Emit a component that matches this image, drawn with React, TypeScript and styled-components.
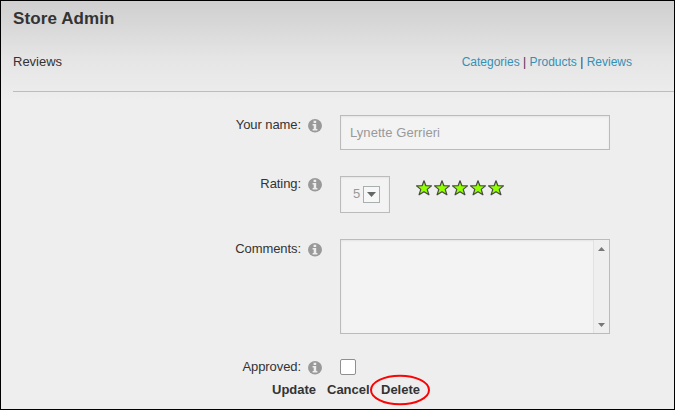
import React from "react";
import styled, { createGlobalStyle } from "styled-components";

const GlobalStyle = createGlobalStyle`
  * { box-sizing: border-box; }
  html, body { margin: 0; padding: 0; }
  body { font: 13px/16px "Liberation Sans", Arial, sans-serif; color: #333; }
`;

const Page = styled.main`
  width: 675px;
  height: 410px;
  border: 1px solid #000;
  overflow: hidden;
  background: linear-gradient(#d0d0d0 0, #d7d7d7 22px, #e5e5e5 57px, #eee 100px, #eee 100%);
`;

const Header = styled.header`
  height: 91px;
  margin-left: 12px;
  padding-top: 8px;
  border-bottom: 1px solid #bdbdbd;
`;

const Title = styled.h1`
  margin: 0;
  font-size: 17px;
  line-height: 20px;
  font-weight: bold;
  letter-spacing: 0.1px;
`;

const SubHeader = styled.div`
  display: flex;
  justify-content: space-between;
  margin-top: 25px;
  padding-right: 42px;
`;

const Nav = styled.nav`
  white-space: pre;
  font-size: 12px;
  line-height: 17px;
  color: #4b2d55;
`;

const NavLink = styled.a`
  color: #3590b5;
`;

const Form = styled.form`
  padding-top: 23px;
`;

const Row = styled.div<{ $height: number }>`
  display: grid;
  grid-template-columns: 300px 14px 1fr;
  column-gap: 7px;
  align-items: start;
  height: ${(p) => p.$height}px;
`;

const Label = styled.label<{ $top?: number }>`
  padding-top: ${(p) => p.$top ?? 2}px;
  text-align: right;
  letter-spacing: -0.08px;
`;

const InfoSvg = styled.svg<{ $top: number }>`
  display: block;
  width: 14px;
  height: 14px;
  margin-top: ${(p) => p.$top}px;
`;

const Field = styled.div`
  display: flex;
  align-items: flex-start;
  padding-left: 11px;
`;

const Box = styled.div<{ $width: number; $height: number }>`
  display: flex;
  width: ${(p) => p.$width}px;
  height: ${(p) => p.$height}px;
  border: 1px solid #bbb;
  background: #f3f3f3;
  box-shadow: inset 0 1px 2px #e4e4e4;
  color: #999;
`;

const NameBox = styled(Box)`
  padding: 9px;
  letter-spacing: 0.06px;
`;

const SelectBox = styled(Box)`
  padding: 9px 0 0 12px;
  gap: 3px;
`;

const SelectArrow = styled.span`
  display: flex;
  align-items: center;
  justify-content: center;
  width: 17px;
  height: 17px;
  border: 1px solid #a9afb1;
  background: #f7f7f7;
`;

const Stars = styled.div`
  display: flex;
  gap: 2px;
  padding: 4px 0 0 26px;
`;

const CommentBox = styled(Box)`
  justify-content: flex-end;
`;

const ScrollBar = styled.div`
  display: flex;
  flex-direction: column;
  justify-content: space-between;
  align-items: center;
  width: 16px;
  padding: 7px 0 6px;
  border-left: 1px solid #e2e2e2;
  background: #efefef;
`;

const Checkbox = styled.span`
  width: 16px;
  height: 16px;
  margin-top: 1px;
  border: 1px solid #8f8f8f;
  border-radius: 2px;
  background: #fff;
`;

const Actions = styled.div`
  display: flex;
  align-items: flex-start;
  padding-left: 271px;
  font-weight: bold;
`;

const Action = styled.a<{ $width: number }>`
  position: relative;
  width: ${(p) => p.$width}px;
`;

const Ring = styled.svg`
  position: absolute;
  left: -12px;
  top: -8px;
`;

const Info = ({ top }: { top: number }) => (
  <InfoSvg $top={top} viewBox="0 0 14 14">
    <ellipse cx="7" cy="6.7" rx="7" ry="6.7" fill="#999" />
    <path d="M5.6 1.8h2.6v2.1H5.6zM4.6 5h3.6v5h1.2v1.6H4.6V10h1.1V6.5H4.6z" fill="#eee" />
  </InfoSvg>
);

const Star = () => (
  <svg width="16" height="16" viewBox="0 0 16 16">
    <path
      d="M8 .8 9.9 5.7 15.5 5.9 11.2 9.4 12.9 14.8 8 11.7 3.1 14.8 4.8 9.4.5 5.9l5.6-.2z"
      fill="#91ff00"
      stroke="#484848"
      strokeWidth="1.2"
      strokeLinejoin="round"
    />
  </svg>
);

export default function App() {
  return (
    <>
      <GlobalStyle />
      <Page>
        <Header>
          <Title>Store Admin</Title>
          <SubHeader>
            <span>Reviews</span>
            <Nav>
              <NavLink>Categories</NavLink> | <NavLink>Products</NavLink> | <NavLink>Reviews</NavLink>
            </Nav>
          </SubHeader>
        </Header>
        <Form>
          <Row $height={61}>
            <Label>Your name:</Label>
            <Info top={4} />
            <Field>
              <NameBox $width={270} $height={35}>Lynette Gerrieri</NameBox>
            </Field>
          </Row>
          <Row $height={63}>
            <Label $top={0}>Rating:</Label>
            <Info top={2} />
            <Field>
              <SelectBox $width={50} $height={37}>
                5
                <SelectArrow>
                  <svg width="9" height="5" viewBox="0 0 9 5">
                    <path d="M0 0h9L4.5 5z" fill="#666" />
                  </svg>
                </SelectArrow>
              </SelectBox>
              <Stars>
                {[1, 2, 3, 4, 5].map((n) => (
                  <Star key={n} />
                ))}
              </Stars>
            </Field>
          </Row>
          <Row $height={119}>
            <Label>Comments:</Label>
            <Info top={4} />
            <Field>
              <CommentBox $width={270} $height={95}>
                <ScrollBar>
                  <svg width="7" height="4" viewBox="0 0 7 4">
                    <path d="M0 4h7L3.5 0z" fill="#777" />
                  </svg>
                  <svg width="7" height="4" viewBox="0 0 7 4">
                    <path d="M0 0h7L3.5 4z" fill="#777" />
                  </svg>
                </ScrollBar>
              </CommentBox>
            </Field>
          </Row>
          <Row $height={24}>
            <Label $top={1}>Approved:</Label>
            <Info top={3} />
            <Field>
              <Checkbox />
            </Field>
          </Row>
          <Actions>
            <Action $width={55}>Update</Action>
            <Action $width={54}>Cancel</Action>
            <Action $width={40}>
              Delete
              <Ring width="62" height="32" viewBox="0 0 62 32">
                <ellipse cx="31" cy="16" rx="29" ry="14.3" fill="none" stroke="#fa0505" strokeWidth="2" />
              </Ring>
            </Action>
          </Actions>
        </Form>
      </Page>
    </>
  );
}
